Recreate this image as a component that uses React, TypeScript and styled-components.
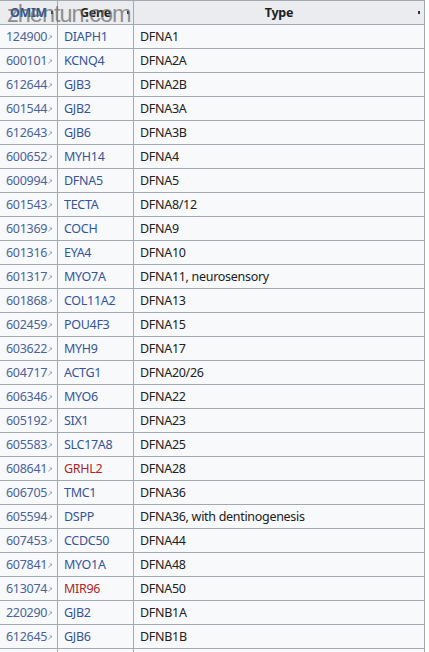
import React from "react";
import styled, { createGlobalStyle } from "styled-components";

const Global = createGlobalStyle`
  html, body { margin: 0; padding: 0; background: #ffffff; }
  body { font-family: "Noto Sans", "Liberation Sans", Arial, sans-serif; }
`;

const Page = styled.div`
  position: relative;
  width: 429px;
  height: 652px;
  overflow: hidden;
`;

const Table = styled.table`
  border-collapse: collapse;
  width: 425px;
  table-layout: fixed;
  background: #f8f9fa;
  color: #202122;
  font-size: 12.5px;
  letter-spacing: -0.3px;
  border: 1px solid #a2a9b1;
  margin-left: -1px;
`;

const Th = styled.th<{ $link?: boolean }>`
  background: #eaecf0;
  border: 1px solid #a2a9b1;
  height: 23px;
  padding: 0 6px;
  font-weight: 700;
  font-size: 12.5px;
  text-align: center;
  position: relative;
  color: ${(p) => (p.$link ? "#2f4f95" : "#202122")};
`;

const SortDot = styled.span`
  position: absolute;
  right: 4px;
  top: 10px;
  width: 2px;
  height: 3px;
  background: #333;
`;

const Td = styled.td`
  border: 1px solid #a2a9b1;
  height: 23px;
  padding: 0 6px;
  white-space: nowrap;
  overflow: hidden;
`;

const OmimLink = styled.span`
  color: #4a639c;
  display: inline-flex;
  align-items: center;
`;

const GeneLink = styled.span<{ $red?: boolean }>`
  color: ${(p) => (p.$red ? "#b32424" : "#34549a")};
`;

const Ext = styled.svg`
  margin-left: 1px;
  margin-top: 2px;
`;

const Watermark = styled.div`
  position: absolute;
  left: 7px;
  top: 1px;
  font-family: "Liberation Sans", Arial, sans-serif;
  font-size: 23.5px;
  color: rgba(100, 100, 100, 0.7);
  letter-spacing: -1px;
  pointer-events: none;
`;

type Row = [string, string, string, boolean?];

const rows: Row[] = [
  ["124900", "DIAPH1", "DFNA1"],
  ["600101", "KCNQ4", "DFNA2A"],
  ["612644", "GJB3", "DFNA2B"],
  ["601544", "GJB2", "DFNA3A"],
  ["612643", "GJB6", "DFNA3B"],
  ["600652", "MYH14", "DFNA4"],
  ["600994", "DFNA5", "DFNA5"],
  ["601543", "TECTA", "DFNA8/12"],
  ["601369", "COCH", "DFNA9"],
  ["601316", "EYA4", "DFNA10"],
  ["601317", "MYO7A", "DFNA11, neurosensory"],
  ["601868", "COL11A2", "DFNA13"],
  ["602459", "POU4F3", "DFNA15"],
  ["603622", "MYH9", "DFNA17"],
  ["604717", "ACTG1", "DFNA20/26"],
  ["606346", "MYO6", "DFNA22"],
  ["605192", "SIX1", "DFNA23"],
  ["605583", "SLC17A8", "DFNA25"],
  ["608641", "GRHL2", "DFNA28", true],
  ["606705", "TMC1", "DFNA36"],
  ["605594", "DSPP", "DFNA36, with dentinogenesis"],
  ["607453", "CCDC50", "DFNA44"],
  ["607841", "MYO1A", "DFNA48"],
  ["613074", "MIR96", "DFNA50", true],
  ["220290", "GJB2", "DFNB1A"],
  ["612645", "GJB6", "DFNB1B"],
];

const ExtIcon = () => (
  <Ext width="4" height="5" viewBox="0 0 4 5">
    <path d="M0.5 4.5 L3.5 1" stroke="#9aa6c8" strokeWidth="1" fill="none" />
    <path d="M1.5 0.8 H3.6 V3" stroke="#9aa6c8" strokeWidth="0.8" fill="none" />
  </Ext>
);

export default function App() {
  return (
    <Page>
      <Global />
      <Table>
        <colgroup>
          <col style={{ width: 58 }} />
          <col style={{ width: 76 }} />
          <col style={{ width: 291 }} />
        </colgroup>
        <thead>
          <tr>
            <Th $link>OMIM<SortDot /></Th>
            <Th>Gene<SortDot /></Th>
            <Th>Type<SortDot /></Th>
          </tr>
        </thead>
        <tbody>
          {rows.map(([omim, gene, type, red]) => (
            <tr key={omim + gene}>
              <Td>
                <OmimLink>
                  {omim}
                  <ExtIcon />
                </OmimLink>
              </Td>
              <Td>
                <GeneLink $red={red}>{gene}</GeneLink>
              </Td>
              <Td>{type}</Td>
            </tr>
          ))}
          <tr>
            <Td />
            <Td />
            <Td />
          </tr>
        </tbody>
      </Table>
      <Watermark>zhentun.com</Watermark>
    </Page>
  );
}
